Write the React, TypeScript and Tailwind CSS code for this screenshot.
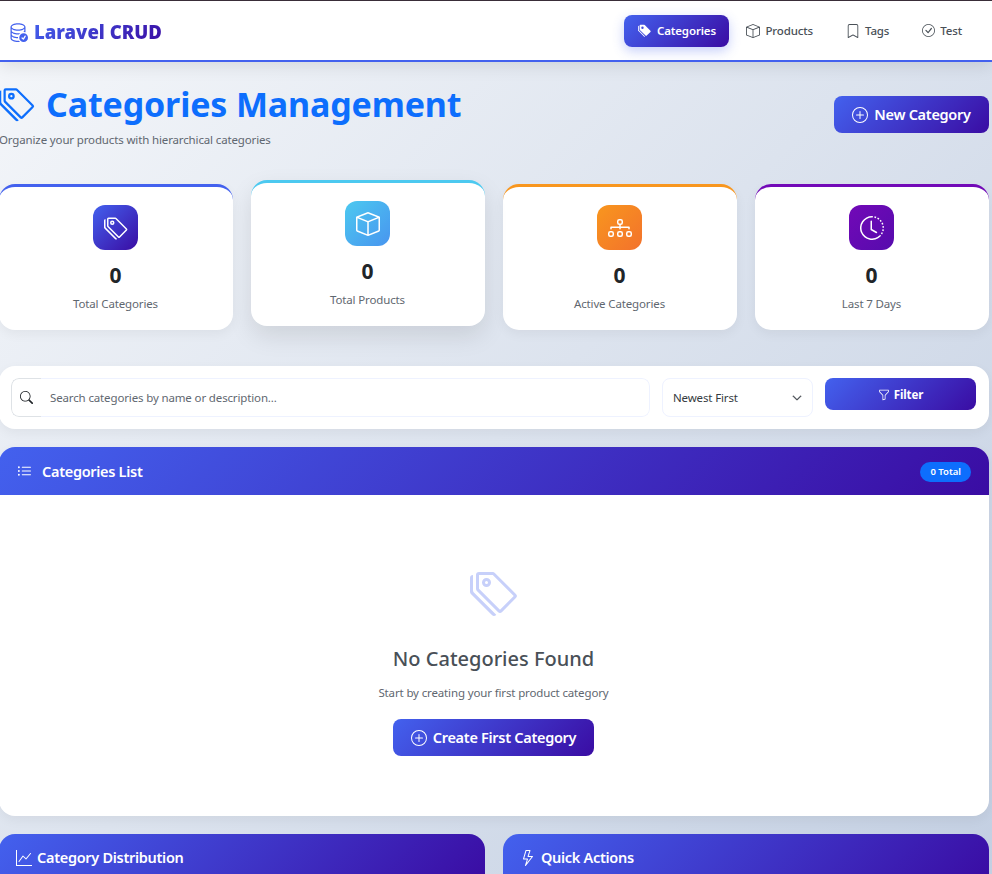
import React from 'react';
import {
  BsBookmark,
  BsBox,
  BsCheckCircle,
  BsChevronDown,
  BsClockHistory,
  BsDatabaseCheck,
  BsDiagram3,
  BsFunnel,
  BsGraphUp,
  BsLightning,
  BsListUl,
  BsPlusCircle,
  BsSearch,
  BsTags,
  BsTagsFill,
} from 'react-icons/bs';

const gradient = 'bg-[linear-gradient(135deg,#4361ee,#3a0ca3)]';
const small = 'text-[11.5px] tracking-[-0.14px]';
const heading = 'text-[14.5px] tracking-[-0.3px] font-semibold';

const navLinks = [
  { label: 'Products', icon: <BsBox className="text-[14px]" /> },
  { label: 'Tags', icon: <BsBookmark className="text-[14px]" /> },
  { label: 'Test', icon: <BsCheckCircle className="text-[13px]" /> },
];

const stats = [
  {
    label: 'Total Categories',
    icon: <BsTags />,
    border: 'border-t-[#4361ee]',
    box: 'bg-[linear-gradient(135deg,#4361ee,#3a0ca3)]',
    lifted: false,
  },
  {
    label: 'Total Products',
    icon: <BsBox />,
    border: 'border-t-[#4cc9f0]',
    box: 'bg-[linear-gradient(135deg,#4cc9f0,#4895ef)]',
    lifted: true,
  },
  {
    label: 'Active Categories',
    icon: <BsDiagram3 />,
    border: 'border-t-[#f8961e]',
    box: 'bg-[linear-gradient(135deg,#f8961e,#f3722c)]',
    lifted: false,
  },
  {
    label: 'Last 7 Days',
    icon: <BsClockHistory />,
    border: 'border-t-[#7209b7]',
    box: 'bg-[linear-gradient(135deg,#7209b7,#560bad)]',
    lifted: false,
  },
];

const StatCard = ({ stat }: { stat: (typeof stats)[number] }) => (
  <div
    className={`h-[146px] rounded-2xl border-t-[3px] bg-white pt-[18px] pr-px text-center ${stat.border} ${
      stat.lifted
        ? '-translate-y-1 shadow-[0_10px_25px_rgba(0,0,0,0.1)]'
        : 'shadow-[0_4px_12px_rgba(0,0,0,0.05)]'
    }`}
  >
    <div className={`mx-auto flex h-[45px] w-[45px] items-center justify-center rounded-xl text-[24px] text-white ${stat.box}`}>
      {stat.icon}
    </div>
    <div className="mt-[10px] text-[21px] leading-[30px] font-bold text-[#212529]">0</div>
    <div className={`mt-[5px] leading-[18px] text-[#5f6770] ${small}`}>{stat.label}</div>
  </div>
);

const App: React.FC = () => {
  return (
    <div className="h-[874px] overflow-hidden bg-[linear-gradient(135deg,#f5f7fa,#c3cfe2)] font-['Noto_Sans','Open_Sans',sans-serif]">
      <div className="h-px bg-[#3b2f3a]" />
      <nav className="relative z-10 flex h-[61px] items-center justify-between border-b-2 border-[#4361ee] bg-white shadow-[0_4px_16px_rgba(0,0,0,0.1)]">
        <div className="mt-[2px] ml-[8px] flex items-center gap-[6px]">
          <BsDatabaseCheck className="text-[20px] text-[#4361ee]" />
          <span className="bg-[linear-gradient(135deg,#4361ee,#3a0ca3)] bg-clip-text text-[18.5px] font-black text-transparent">
            Laravel CRUD
          </span>
        </div>
        <div className="mr-[14px] flex items-center gap-px">
          <a className={`flex h-8 w-[105px] items-center justify-center gap-[6px] rounded-lg font-semibold text-white shadow-[0_4px_12px_rgba(67,97,238,0.3)] ${small} ${gradient}`}>
            <BsTagsFill className="text-[13px]" />
            Categories
          </a>
          {navLinks.map((link) => (
            <a key={link.label} className={`flex h-8 items-center justify-center gap-[5px] px-4 font-medium text-[#495057] ${small}`}>
              {link.icon}
              {link.label}
            </a>
          ))}
        </div>
      </nav>

      <main className="-ml-px w-[990px]">
        <div className="flex h-[122px] items-start justify-between">
          <div>
            <h1 className="mt-[18px] flex items-center gap-[11px] text-[34px] leading-[48px] font-bold tracking-[-0.15px] text-[#0d6efd]">
              <BsTags className="text-[36px]" />
              Categories Management
            </h1>
            <p className={`mt-[3px] leading-[18px] text-[#5f6770] ${small}`}>
              Organize your products with hierarchical categories
            </p>
          </div>
          <button className={`mt-[34px] flex h-[37px] w-[155px] items-center justify-center gap-[6px] rounded-lg text-white ${heading} ${gradient}`}>
            <BsPlusCircle className="text-[16px]" />
            New Category
          </button>
        </div>

        <section className="grid grid-cols-4 gap-[18px]">
          {stats.map((stat) => (
            <StatCard key={stat.label} stat={stat} />
          ))}
        </section>

        <section className="mt-9 flex h-[63px] gap-3 rounded-2xl bg-white px-[12px] pt-3 shadow-[0_4px_12px_rgba(0,0,0,0.05)]">
          <div className="flex h-[39px] w-[639px] overflow-hidden rounded-lg">
            <span className="flex w-[30px] items-center justify-end rounded-l-lg border border-r-0 border-[#dee2e6] pr-[8px] text-[13px] text-[#212529]">
              <BsSearch />
            </span>
            <input
              className={`min-w-0 flex-1 rounded-r-lg border border-l-0 border-[#eef2ff] pl-[9px] text-[#212529] outline-none placeholder:text-[#5f6770] ${small}`}
              placeholder="Search categories by name or description..."
            />
          </div>
          <div className="relative h-[39px] w-[151px]">
            <select className={`h-full w-full appearance-none rounded-lg border border-[#eef2ff] bg-white pl-[10px] text-[#343a40] outline-none ${small}`}>
              <option>Newest First</option>
            </select>
            <BsChevronDown
              stroke="currentColor"
              strokeWidth={1}
              className="pointer-events-none absolute top-[15px] right-[11px] text-[10px] text-[#343a40]"
            />
          </div>
          <button className={`flex h-8 w-[151px] items-center justify-center gap-1 rounded-lg pt-px font-bold text-white ${small} ${gradient}`}>
            <BsFunnel className="text-[12px]" />
            Filter
          </button>
        </section>

        <section className="mt-[18px] h-[369px] overflow-hidden rounded-2xl bg-white shadow-[0_4px_12px_rgba(0,0,0,0.05)]">
          <header className={`flex h-12 items-center justify-between px-[18px] pt-px text-white ${gradient}`}>
            <h2 className={`flex items-center gap-[10px] ${heading}`}>
              <BsListUl className="text-[15px]" />
              Categories List
            </h2>
            <span className="rounded-full bg-[#0d6efd] px-[10px] py-[2px] text-[9.5px] leading-[16px] font-semibold">0 Total</span>
          </header>
          <div className="flex flex-col items-center pt-[74px] pr-px">
            <BsTags className="text-[48px] text-[#c7d0fa]" />
            <h3 className="mt-[26px] text-[20px] leading-[32px] font-medium text-[#495057]">No Categories Found</h3>
            <p className={`mt-[9px] leading-[18px] text-[#5f6770] ${small}`}>Start by creating your first product category</p>
            <button className={`mt-[17px] flex h-[37px] w-[201px] items-center justify-center gap-[6px] rounded-lg text-white ${heading} ${gradient}`}>
              <BsPlusCircle className="text-[16px]" />
              Create First Category
            </button>
          </div>
        </section>

        <section className="mt-[18px] grid grid-cols-2 gap-[18px]">
          <div className={`h-[48px] rounded-t-2xl pb-px pl-[17px] text-white ${gradient}`}>
            <h2 className={`flex h-full items-center gap-[5px] ${heading}`}>
              <BsGraphUp className="text-[16px]" />
              Category Distribution
            </h2>
          </div>
          <div className={`h-[48px] rounded-t-2xl pb-px pl-[17px] text-white ${gradient}`}>
            <h2 className={`flex h-full items-center gap-[5px] ${heading}`}>
              <BsLightning className="text-[16px]" />
              Quick Actions
            </h2>
          </div>
        </section>
      </main>
    </div>
  );
};

export default App;
